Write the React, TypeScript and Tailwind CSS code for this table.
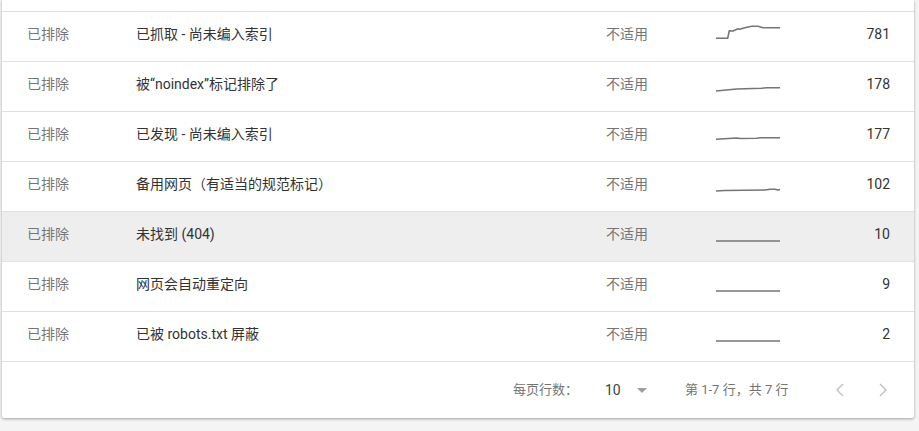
const rows = [
  { reason: "已抓取 - 尚未编入索引", count: 781, points: "0,16.3 11.7,16.3 13.3,8.7 17,9 22,6.7 24,7.3 27,6.3 31,5.3 36,4.3 42,4.3 47,5.7 64,5.7" },
  { reason: "被“noindex”标记排除了", count: 178, points: "0,19 20.7,17 45.7,16.3 50.7,15.7 64,15.7" },
  { reason: "已发现 - 尚未编入索引", count: 177, points: "0,17.3 20.7,16 24,16.5 40.7,16.3 44,15.7 64,15.7" },
  { reason: "备用网页（有适当的规范标记）", count: 102, points: "0,19 9,18.5 49,18 54,17.3 59,17.3 62,18 64,17.5" },
  { reason: "未找到 (404)", count: 10, points: "0,19 64,19", active: true },
  { reason: "网页会自动重定向", count: 9, points: "0,19 64,19" },
  { reason: "已被 robots.txt 屏蔽", count: 2, points: "0,19 64,19" },
];

const font = { fontFamily: "Roboto, 'Noto Sans CJK SC', sans-serif" };

function Spark({ points }: { points: string }) {
  return (
    <svg width="64" height="30" viewBox="0 0 64 30" className="block">
      <polyline points={points} fill="none" stroke="#757575" strokeWidth="1.6" strokeLinejoin="round" />
    </svg>
  );
}

export default function App() {
  return (
    <div className="w-[919px] h-[431px] overflow-hidden bg-[#f4f4f4] pl-[2px]" style={font}>
      <div className="w-[912px] bg-white rounded-b-[2px] shadow-[0_1px_3px_rgba(0,0,0,0.35)]">
        <div className="h-[11px]" />
        {rows.map((r) => (
          <div
            key={r.reason}
            className={`grid grid-cols-[109px_470px_110px_64px_1fr] items-center h-[50px] border-t border-[#e0e0e0] pl-[25px] pr-[24px] text-[14px] ${r.active ? "bg-[#eeeeee]" : ""}`}
          >
            <span className="text-[#757575] -mt-[4px]">已排除</span>
            <span className="text-[#333333] -mt-[4px] whitespace-nowrap">{r.reason}</span>
            <span className="text-[#757575] -mt-[4px]">不适用</span>
            <Spark points={r.points} />
            <span className="text-right text-[#333333] -mt-[4px]">{r.count}</span>
          </div>
        ))}
        <div className="flex items-center h-[57px] border-t border-[#e0e0e0] pl-[511px] text-[13px] text-[#757575]">
          <span className="w-[92px] whitespace-nowrap">每页行数：</span>
          <span className="w-[32px] text-[14px] text-[#424242]">10</span>
          <span className="w-0 h-0 border-l-[5px] border-r-[5px] border-t-[5px] border-l-transparent border-r-transparent border-t-[#9e9e9e]" />
          <span className="ml-[38px] w-[110px] whitespace-nowrap">第 1-7 行，共 7 行</span>
          <span className="ml-[33px] w-[24px] flex justify-center">
            <svg width="8" height="14" viewBox="0 0 8 14">
              <polyline points="7,1 1,7 7,13" fill="none" stroke="#bdbdbd" strokeWidth="1.3" />
            </svg>
          </span>
          <span className="ml-[19px] w-[24px] flex justify-center">
            <svg width="8" height="14" viewBox="0 0 8 14">
              <polyline points="1,1 7,7 1,13" fill="none" stroke="#bdbdbd" strokeWidth="1.3" />
            </svg>
          </span>
        </div>
      </div>
    </div>
  );
}
